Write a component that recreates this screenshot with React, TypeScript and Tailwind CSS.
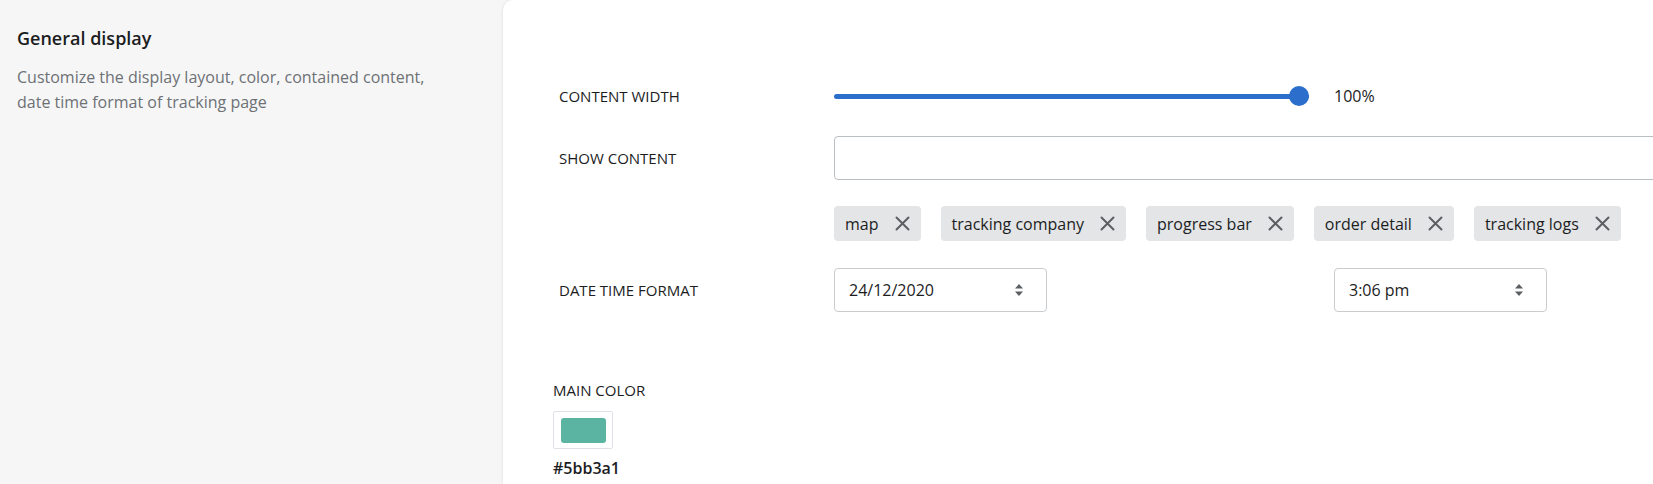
// App.tsx
const tags = ['map', 'tracking company', 'progress bar', 'order detail', 'tracking logs'];

const XIcon = () => (
  <svg width="15" height="15" viewBox="0 0 15 15" className="shrink-0">
    <path d="M1.5 1.5 L13.5 13.5 M13.5 1.5 L1.5 13.5" stroke="#5c5f62" strokeWidth="2" strokeLinecap="round" />
  </svg>
);

const Arrows = () => (
  <svg width="10" height="14" viewBox="0 0 10 14" className="shrink-0">
    <path d="M5 1 L9 5.5 H1 Z" fill="#5c5f62" />
    <path d="M5 13 L9 8.5 H1 Z" fill="#5c5f62" />
  </svg>
);

const Select = ({ value }: { value: string }) => (
  <div className="w-[213px] h-[44px] border border-[#c9cccf] rounded-[4px] flex items-center justify-between pl-[14px] pr-[22px] text-[16px] text-[#1c1d1e]">
    <span>{value}</span>
    <Arrows />
  </div>
);

const App = () => {
  return (
    <div
      className="w-[1653px] h-[484px] overflow-hidden flex bg-[#f6f6f7]"
      style={{ fontFamily: '"Open Sans", "Noto Sans", sans-serif' }}
    >
      {/* left description column */}
      <div className="w-[503px] shrink-0 pl-[17px] pt-[26px]">
        <h2 className="text-[18px] leading-[24px] font-semibold text-[#1c1d1e]">General display</h2>
        <p className="mt-[15px] text-[16px] leading-[25px] text-[#6d7175] w-[425px]">
          Customize the display layout, color, contained content, date time format of tracking page
        </p>
      </div>

      {/* settings card */}
      <div className="flex-1 bg-white rounded-tl-[10px] shadow-[0_0_3px_rgba(0,0,0,0.12)] pt-[76px] overflow-hidden">
        <div className="pl-[56px] text-[#1c1d1e]">
          {/* content width */}
          <div className="flex items-center h-[40px]">
            <div className="w-[275px] text-[15px]">CONTENT WIDTH</div>
            <div className="relative w-[475px] h-[20px] flex items-center">
              <div className="w-full h-[5px] rounded-full bg-[#2c6ecb]" />
              <div className="absolute right-0 top-0 w-[20px] h-[20px] rounded-full bg-[#2c6ecb]" />
            </div>
            <div className="ml-[25px] text-[16px]">100%</div>
          </div>

          {/* show content */}
          <div className="flex items-center mt-[20px]">
            <div className="w-[275px] shrink-0 text-[15px]">SHOW CONTENT</div>
            <div className="w-[900px] shrink-0 h-[44px] border border-[#babfc3] rounded-[4px]" />
          </div>
          <div className="flex gap-[20px] mt-[26px] pl-[275px]">
            {tags.map((t) => (
              <div
                key={t}
                className="h-[35px] bg-[#e4e5e7] rounded-[4px] flex items-center gap-[16px] pl-[11px] pr-[11px] text-[16px] whitespace-nowrap"
              >
                <span>{t}</span>
                <XIcon />
              </div>
            ))}
          </div>

          {/* date time */}
          <div className="flex items-center mt-[27px]">
            <div className="w-[275px] shrink-0 text-[15px]">DATE TIME FORMAT</div>
            <div className="w-[500px] shrink-0">
              <Select value="24/12/2020" />
            </div>
            <Select value="3:06 pm" />
          </div>
        </div>

        {/* main color */}
        <div className="pl-[50px] mt-[68px] text-[#1c1d1e]">
          <div className="text-[15px] leading-[20px]">MAIN COLOR</div>
          <div className="mt-[11px] w-[60px] h-[38px] border border-[#dfe3e8] rounded-[2px] flex items-center justify-center">
            <div className="w-[45px] h-[25px] rounded-[3px] bg-[#5bb3a1]" />
          </div>
          <div className="mt-[8px] text-[16px] leading-[22px] font-semibold">#5bb3a1</div>
        </div>
      </div>
    </div>
  );
};

export default App;
